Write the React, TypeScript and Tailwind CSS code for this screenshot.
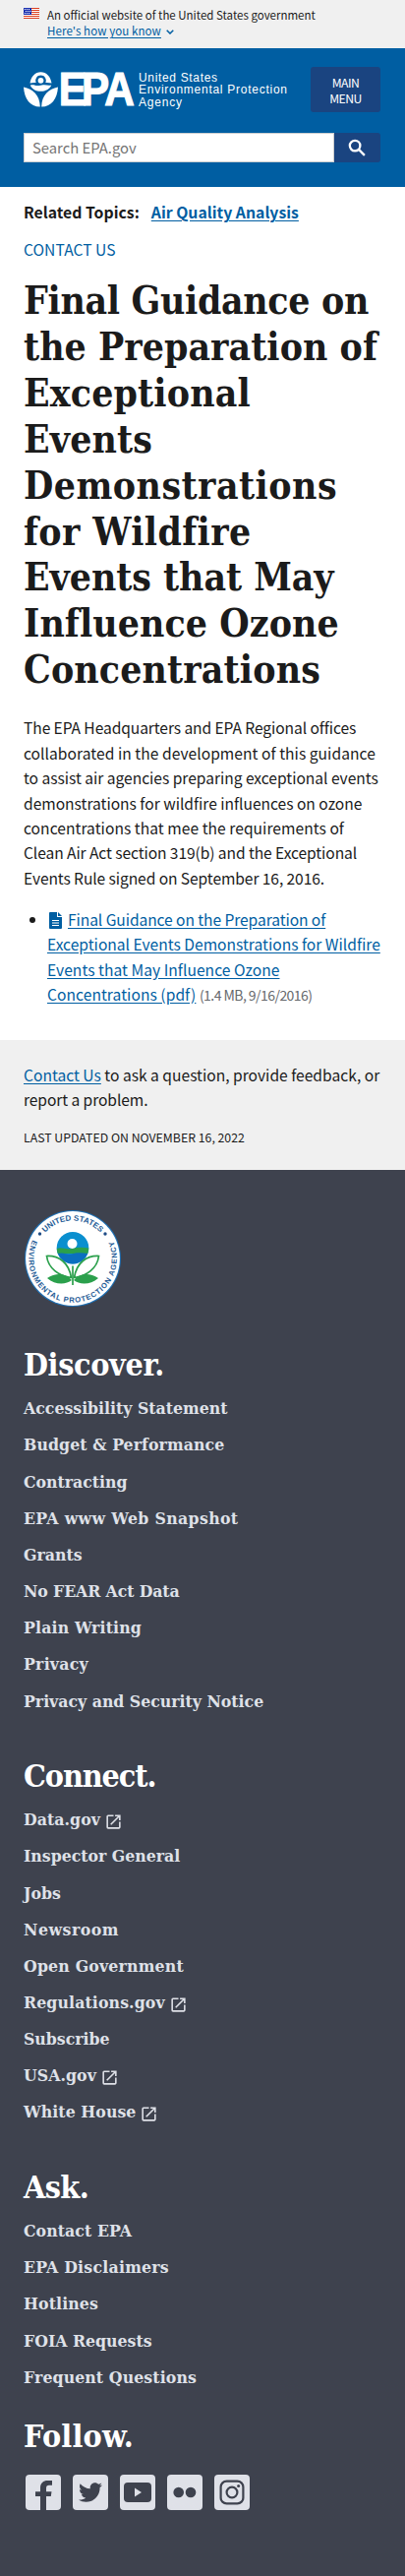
import type { ReactNode } from "react";
import { FaTwitter } from "react-icons/fa";
import { MdLaunch } from "react-icons/md";

const sans = "font-['Noto_Sans_CJK_SC',sans-serif]";
const serif = "font-['DejaVu_Serif_Condensed','DejaVu_Serif',serif] [font-stretch:condensed] font-bold";

type Item = { text: string; tracking?: string; external?: boolean };

const discover: Item[] = [
  { text: "Accessibility Statement" },
  { text: "Budget & Performance", tracking: "tracking-[0.1px]" },
  { text: "Contracting" },
  { text: "EPA www Web Snapshot", tracking: "tracking-[0.36px]" },
  { text: "Grants" },
  { text: "No FEAR Act Data", tracking: "tracking-[-0.1px]" },
  { text: "Plain Writing", tracking: "tracking-[0.17px]" },
  { text: "Privacy", tracking: "tracking-[0.25px]" },
  { text: "Privacy and Security Notice" },
];

const connect: Item[] = [
  { text: "Data.gov", tracking: "tracking-[0.06px]", external: true },
  { text: "Inspector General" },
  { text: "Jobs" },
  { text: "Newsroom", tracking: "tracking-[0.52px]" },
  { text: "Open Government", tracking: "tracking-[0.2px]" },
  { text: "Regulations.gov", tracking: "tracking-[0.12px]", external: true },
  { text: "Subscribe" },
  { text: "USA.gov", tracking: "tracking-[0.06px]", external: true },
  { text: "White House", tracking: "tracking-[0.08px]", external: true },
];

const ask: Item[] = [
  { text: "Contact EPA", tracking: "tracking-[0.08px]" },
  { text: "EPA Disclaimers", tracking: "tracking-[0.24px]" },
  { text: "Hotlines", tracking: "tracking-[0.13px]" },
  { text: "FOIA Requests" },
  { text: "Frequent Questions", tracking: "tracking-[0.11px]" },
];

const title: Item[] = [
  { text: "Final Guidance on", tracking: "tracking-[-0.33px]" },
  { text: "the Preparation of", tracking: "tracking-[0.04px]" },
  { text: "Exceptional", tracking: "tracking-[0.16px]" },
  { text: "Events", tracking: "tracking-[0.12px]" },
  { text: "Demonstrations", tracking: "tracking-[0.46px]" },
  { text: "for Wildfire", tracking: "tracking-[0.37px]" },
  { text: "Events that May", tracking: "tracking-[-0.05px]" },
  { text: "Influence Ozone", tracking: "tracking-[0.08px]" },
  { text: "Concentrations", tracking: "tracking-[0.13px]" },
];

const intro: Item[] = [
  { text: "The EPA Headquarters and EPA Regional offices", tracking: "tracking-[-0.09px]" },
  { text: "collaborated in the development of this guidance", tracking: "tracking-[0.04px]" },
  { text: "to assist air agencies preparing exceptional events", tracking: "tracking-[-0.03px]" },
  { text: "demonstrations for wildfire influences on ozone", tracking: "tracking-[-0.02px]" },
  { text: "concentrations that mee the requirements of", tracking: "tracking-[0.04px]" },
  { text: "Clean Air Act section 319(b) and the Exceptional", tracking: "tracking-[-0.09px]" },
  { text: "Events Rule signed on September 16, 2016.", tracking: "tracking-[-0.09px]" },
];

function Lines({ items }: { items: Item[] }) {
  return (
    <>
      {items.map((l) => (
        <span key={l.text} className={`block whitespace-nowrap ${l.tracking ?? ""}`}>
          {l.text}
        </span>
      ))}
    </>
  );
}

function Flag() {
  return (
    <svg viewBox="0 0 16 11" className="mt-[1px] h-[11px] w-4 shrink-0">
      <rect width="16" height="11" fill="#fff" />
      {[0, 2, 4, 6, 8, 10].map((y) => (
        <rect key={y} y={y} width="16" height="1" fill="#db3e1f" />
      ))}
      <rect width="8" height="7" fill="#1e33b1" />
      {[1, 3, 5].map((y) =>
        [1, 3, 5].map((x) => <rect key={`${x}-${y}`} x={x + (y === 3 ? 1 : 0)} y={y} width="1" height="1" fill="#fff" />),
      )}
    </svg>
  );
}

function Logo() {
  return (
    <svg viewBox="0 0 270 40" className="h-10 w-[270px] overflow-visible" fill="#fff">
      <path d="M6.500 12.600C7.400 5.800 11.800 1.200 17.500 1.200S27.600 5.800 28.500 12.600C26.500 12 24.500 11.800 22.300 12A5.300 5.300 0 1 0 12.700 12C10.500 11.800 8.500 12 6.500 12.600z" />
      <circle cx="17.500" cy="9.800" r="2.900" />
      <path d="M6.800 14.700c3-1 5 .4 7.500.4s4-1.200 6.700-.8 5 .8 7.300.2C26.500 18.500 22.500 20.800 17.500 20.800S8.500 18.500 6.800 14.700z" />
      <path d="M0 16.500C9.500 18.500 16.500 24.500 16.800 36.500C6.500 36.500.8 28.500 0 16.500zM35 16.500C25.500 18.500 18.500 24.500 18.200 36.500C28.500 36.500 34.200 28.500 35 16.500z" />
      <text
        x="40.500 67.200 93.500"
        y="35.300"
        transform="scale(.88 1)"
        fontFamily="Liberation Sans, sans-serif"
        fontWeight="700"
        fontSize="48"
        stroke="#fff"
        strokeWidth="1.200"
      >
        EPA
      </text>
      <g fontFamily="Liberation Sans, sans-serif" fontSize="12">
        <text x="117" y="10.800" textLength="80">United States</text>
        <text x="117" y="23.300" textLength="151">Environmental Protection</text>
        <text x="117" y="35.900" textLength="44">Agency</text>
      </g>
    </svg>
  );
}

function Seal() {
  return (
    <svg viewBox="-50 -50 100 100" className="block size-[100px]">
      <defs>
        <path id="seal-top" d="M-38.500 0A38.500 38.500 0 0 1 38.500 0" />
        <path id="seal-bottom" d="M-40.600 -18.900A44.800 44.800 0 1 0 40.600 -18.900" />
      </defs>
      <circle r="49" fill="#1f70b4" />
      <circle r="47.900" fill="#fff" />
      <g fill="#1f5c96" fontFamily="Liberation Sans, sans-serif" fontSize="8" fontWeight="700">
        <text textAnchor="middle">
          <textPath href="#seal-top" startOffset="50%" textLength="63">UNITED STATES</textPath>
        </text>
        <text fontSize="7.600">
          <textPath href="#seal-bottom" startOffset="0" textLength="178">ENVIRONMENTAL PROTECTION AGENCY</textPath>
        </text>
      </g>
      <circle cx="-33.500" cy="-25" r="1.700" fill="#1f4c86" />
      <circle cx="33" cy="-25" r="1.700" fill="#1f4c86" />
      <circle cy="-10.800" r="16.300" fill="#0a8fcf" />
      <path d="M-16.200 -10C-11 -12-7-8.500-1-10S11-11.500 16.200-10.500A16.300 16.300 0 0 1 15.200-5H-15.200A16.300 16.300 0 0 1-16.200-10z" fill="#2ba04c" />
      <path d="M-15.200-5C-9-7-5-3-1-4.500S9-6 15.200-5A16.300 16.300 0 0 1-15.200-5z" fill="#0b6fc0" />
      <circle cx="-.5" cy="-15" r="5" fill="#fff" />
      <path d="M-26.500-2.500C-14-3-4 4-1.500 19.500C-14 18-25 10-26.500-2.500zM26.500-2.500C14-3 4 4 1.500 19.500C14 18 25 10 26.500-2.500z" fill="#fff" stroke="#2ba04c" strokeWidth="1.700" />
      <path d="M-1 22C-8 14-18 15-26 20C-18 27-7 27-1 22zM1 22C8 14 18 15 26 20C18 27 7 27 1 22z" fill="#2ba04c" />
      <path d="M0 7.500V27" stroke="#2ba04c" strokeWidth="1.700" />
    </svg>
  );
}

function FooterNav({ heading, headingTracking, items }: { heading: string; headingTracking: string; items: Item[] }) {
  return (
    <nav className={`mb-[38px] ${serif}`}>
      <h2 className={`mb-[7.5px] text-[32px] leading-[38px] text-white ${headingTracking}`}>{heading}</h2>
      <ul className="text-[17.5px] leading-[37.16px] text-[#dfe1e8]">
        {items.map((i) => (
          <li key={i.text} className="flex h-[37.16px] items-center whitespace-nowrap">
            <a className={i.tracking ?? ""}>{i.text}</a>
            {i.external && <MdLaunch className="mt-[3px] ml-1 size-[19px]" />}
          </li>
        ))}
      </ul>
    </nav>
  );
}

function Social({ children }: { children: ReactNode }) {
  return <a className="block size-9 overflow-hidden rounded-[4px] bg-[#dfe1e8] text-[#3e424e]">{children}</a>;
}

export default function App() {
  return (
    <div className={`min-h-[2618px] w-full overflow-hidden bg-white text-[#1b1b1b] ${sans}`}>
      <section className="flex h-[49px] gap-2 bg-[#f0f0f0] px-6 pt-[7px] text-[11.5px] leading-4">
        <Flag />
        <div className="whitespace-nowrap">
          <p>An official website of the United States government</p>
          <p className="flex items-center gap-[5px] text-[#005ea2]">
            <span className="tracking-[0.1px] underline underline-offset-2">Here's how you know</span>
            <svg viewBox="0 0 8 5" className="mt-[3px] h-[5px] w-2" fill="none" stroke="currentColor" strokeWidth="1.500">
              <path d="M.7.7 4 4 7.300.7" />
            </svg>
          </p>
        </div>
      </section>

      <header className="h-[141px] bg-[#005ea2] px-6 pt-[19px]">
        <div className="flex h-[46px] items-start">
          <div className="mt-1 w-[292px] shrink-0">
            <Logo />
          </div>
          <button className="h-[46px] w-[71px] rounded-[3px] bg-[#1a4480] pt-px text-[12.2px] leading-4 tracking-[-0.5px] text-white">
            MAIN
            <br />
            MENU
          </button>
        </div>
        <form className="mt-[21px] flex h-[30px]">
          <div className="w-[316px] border border-[#565c65]/30 bg-white pl-2 text-[14.8px] leading-[28px] text-[#757575]">Search EPA.gov</div>
          <button className="flex w-[47px] items-center justify-center rounded-r-[3px] bg-[#1a4480] text-white">
            <svg viewBox="0 0 24 24" className="size-[23px]" fill="none" stroke="currentColor" strokeWidth="2.400">
              <circle cx="9.500" cy="9.500" r="5.500" />
              <path d="M13.500 13.500l6.200 6.200" />
            </svg>
          </button>
        </form>
      </header>

      <main className="h-[867px] px-6">
        <div className="flex h-[45px] items-start gap-[12px] pt-[14.300px] text-[15.8px] leading-[24px] font-bold whitespace-nowrap">
          <span>Related Topics:</span>
          <a className="text-[#005ea2] underline underline-offset-2">Air Quality Analysis</a>
        </div>
        <p className="mt-[5.500px] text-[15.6px] leading-6 tracking-[0.05px] text-[#005ea2]">CONTACT US</p>
        <h1 className={`mt-[18.500px] text-[38.8px] leading-[46.9px] ${serif}`}>
          <Lines items={title} />
        </h1>
        <p className="mt-[22.300px] text-[15.6px] leading-[25.4px]">
          <Lines items={intro} />
        </p>
        <ul className="mt-[16.500px] flex text-[15.6px] leading-[25.4px]">
          <li className="flex">
            <span className="mt-[10px] ml-[6px] size-[6px] shrink-0 rounded-full bg-[#1b1b1b]" />
            <div className="ml-3 whitespace-nowrap">
              <a className="text-[#005ea2]">
                <span className="flex h-[25.400px] items-center">
                  <svg viewBox="0 0 13 17" className="mt-[2px] mr-[6px] ml-[2px] h-[17px] w-[13px]">
                    <path d="M1 0h7v5h5v11a1 1 0 0 1-1 1H1a1 1 0 0 1-1-1V1a1 1 0 0 1 1-1zM9 0l4 4H9z" fill="#005ea2" />
                    <path d="M3 8.500h7M3 11h7M3 13.500h7" stroke="#fff" strokeWidth="1" />
                  </svg>
                  <span className="tracking-[-0.08px] underline underline-offset-2">Final Guidance on the Preparation of</span>
                </span>
                <span className="block underline underline-offset-2">Exceptional Events Demonstrations for Wildfire</span>
                <span className="block tracking-[0.04px] underline underline-offset-2">Events that May Influence Ozone</span>
                <span className="tracking-[0.05px] underline underline-offset-2">Concentrations (pdf)</span>
              </a>
              <span className="ml-[3.500px] text-[14px] tracking-[-0.55px] text-[#66696d]">(1.4 MB, 9/16/2016)</span>
            </div>
          </li>
        </ul>
      </main>

      <section className="h-[132px] bg-[#f0f0f0] px-6 pt-[22.800px] text-[15.6px] leading-[25.4px] whitespace-nowrap">
        <p>
          <a className="text-[#005ea2] underline underline-offset-2">Contact Us</a> to ask a question, provide feedback, or
          <br />
          <span className="tracking-[-0.08px]">report a problem.</span>
        </p>
        <p className="mt-[13px] text-[12.3px] leading-6">LAST UPDATED ON NOVEMBER 16, 2022</p>
      </section>

      <footer className="h-[1429px] bg-[#3e424e] px-6 pt-10">
        <div className="mb-[38.800px]">
          <Seal />
        </div>
        <FooterNav heading="Discover." headingTracking="tracking-[-0.35px]" items={discover} />
        <FooterNav heading="Connect." headingTracking="tracking-[-1.1px]" items={connect} />
        <FooterNav heading="Ask." headingTracking="tracking-[-0.6px]" items={ask} />
        <div className="-mt-[15.500px]">
          <h2 className={`text-[32px] leading-[38px] tracking-[0.2px] text-white ${serif}`}>Follow.</h2>
          <div className="mt-[19.500px] ml-[2px] flex gap-3">
            <Social>
              <svg viewBox="0 0 36 36" fill="currentColor">
                <path d="M15 36V22H10V17.200H15V13.500C15 8.500 18 6 22.500 6H27V10.800H24C21.800 10.800 21 12 21 14V17.200H26.500L25.800 22H21V36z" />
              </svg>
            </Social>
            <Social>
              <FaTwitter className="m-[6px] size-6" />
            </Social>
            <Social>
              <svg viewBox="0 0 36 36">
                <rect x="4" y="8" width="28" height="20" rx="4" fill="currentColor" />
                <path d="M15 13.500V22.500L22 18z" fill="#dfe1e8" />
              </svg>
            </Social>
            <Social>
              <svg viewBox="0 0 36 36" fill="currentColor">
                <circle cx="11.700" cy="18" r="5.300" />
                <circle cx="24" cy="18" r="5.300" />
              </svg>
            </Social>
            <Social>
              <svg viewBox="0 0 36 36" fill="none" stroke="currentColor" strokeWidth="2.200">
                <rect x="6.600" y="6.600" width="22.800" height="22.800" rx="6" />
                <circle cx="18" cy="18" r="5.400" />
                <circle cx="24.600" cy="11.400" r="1.500" fill="currentColor" stroke="none" />
              </svg>
            </Social>
          </div>
        </div>
      </footer>
    </div>
  );
}
